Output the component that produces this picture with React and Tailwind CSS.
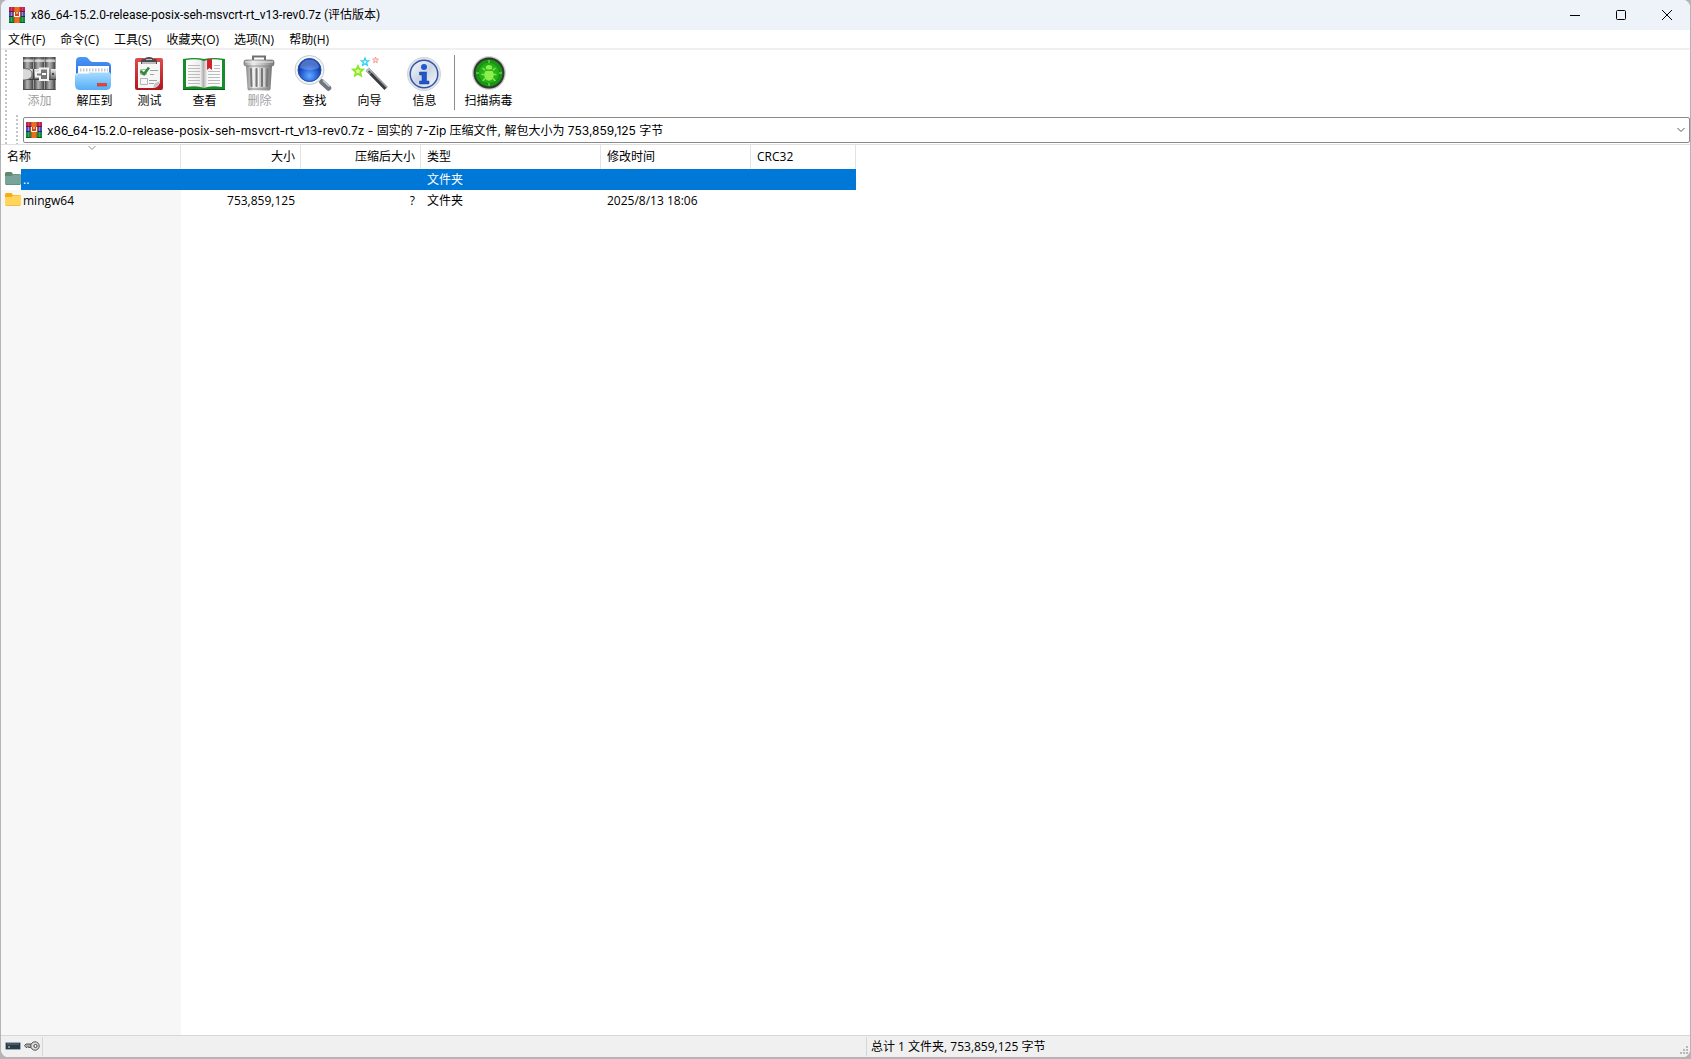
import React from 'react';

const menus = ['文件(F)', '命令(C)', '工具(S)', '收藏夹(O)', '选项(N)', '帮助(H)'];

function RarIcon() {
  return (
    <svg className="w-4 h-4 shrink-0" viewBox="0 0 16 16" aria-hidden="true">
      <rect width="16" height="5" fill="#c02450" />
      <rect y="5" width="16" height="5" fill="#4a4fc0" />
      <rect y="10" width="16" height="6" fill="#128a3c" />
      <path d="M0 4.500h16" stroke="#7a1238" />
      <path d="M0 9.500h16" stroke="#2a2470" />
      <path d="M0 15.500h16" stroke="#0b5a28" />
      <path d="M2.500 5v4M13.500 5v4" stroke="#9a8cd6" />
      <path d="M2.500 10v5M13.500 10v5" stroke="#3fa458" />
      <path d="M2.500 0v4M13.500 0v4" stroke="#d04468" />
      <rect x="5" width="6" height="16" fill="#e8701c" />
      <path d="M5.500 0v16M10.500 0v16" stroke="#c45c1c" />
      <rect x="4" y="5" width="8" height="5" fill="#c44a1c" />
      <path d="M5.500 5v4.500h5V5" stroke="#fff" fill="none" />
      <path d="M8 5v2" stroke="#fff" />
    </svg>
  );
}

function AddIcon() {
  return (
    <svg className="w-[43px] h-9" viewBox="-1 0 43 36" aria-hidden="true">
      <defs>
        <linearGradient id="book">
          <stop offset="0" stopColor="#454545" />
          <stop offset=".4" stopColor="#b4b4b4" />
          <stop offset=".65" stopColor="#8a8a8a" />
          <stop offset="1" stopColor="#3a3a3a" />
        </linearGradient>
        <linearGradient id="belt" x2="0" y2="1">
          <stop offset="0" stopColor="#eee" />
          <stop offset=".5" stopColor="#b5b5b5" />
          <stop offset="1" stopColor="#6c6c6c" />
        </linearGradient>
      </defs>
      <path d="M4 2h10.500v33H4z" fill="url(#book)" />
      <path d="M15 2h10.500v33H15z" fill="url(#book)" />
      <path d="M26 2h10.500v33H26z" fill="url(#book)" />
      <path d="M4.500 4.500h9.500v2.500H4.500zM15.500 4.500h9.500v2.500h-9.500zM26.500 4.500h9.500v2.500h-9.500z" fill="#e6e6e6" opacity=".75" />
      <path d="M4 3h32.500M4 34.500h32.500" stroke="#505050" />
      <path d="M4 14h33v10H4z" fill="url(#belt)" />
      <path d="M4 24.500h33" stroke="#3f3f3f" />
      <path d="M4 13.500c6 0 9 1.500 9 5.500s-3 6-9 6" fill="#d9d9d9" stroke="#6a6a6a" />
      <path d="M14.500 14v10" stroke="#404040" strokeWidth="1.500" />
      <path d="M21 13.500h8v11.500h-8v-3.500h-4v-4h4z" fill="#777" stroke="#f3f3f3" strokeWidth="2" />
      <path d="M23 19h4" stroke="#fff" strokeWidth="2" />
      <path d="M31 14v10" stroke="#4a4a4a" />
      <circle cx="34" cy="19" r="1.200" fill="#444" />
    </svg>
  );
}

function ExtractIcon() {
  return (
    <svg className="w-[43px] h-9" viewBox="0 0 43 36" aria-hidden="true">
      <defs>
        <linearGradient id="folderBack" x2="0" y2="1">
          <stop offset="0" stopColor="#4c98f8" />
          <stop offset="1" stopColor="#2159d9" />
        </linearGradient>
        <linearGradient id="folderFront" x2="0" y2="1">
          <stop offset="0" stopColor="#a9dcff" />
          <stop offset="1" stopColor="#55adf8" />
        </linearGradient>
      </defs>
      <path d="M3 6q0-4 4-4h5c4 0 4 5 8 5h13q5 0 5 4.500v16H3z" fill="url(#folderBack)" />
      <path d="M5 11h31v14H5z" fill="#fff" />
      <path d="M7 15h28" stroke="#c3c7d0" strokeWidth="3" strokeDasharray="1.500 1.500" />
      <path d="M2 21q0-3 3-3h9c3 0 3-1 5-1h16q3 0 3 3v10q0 5-5 5H7q-5 0-5-5z" fill="url(#folderFront)" />
      <path d="M3 21q0-2.500 3-2.500h8c3 0 3-1 5-1h16" fill="none" stroke="#d4efff" />
      <rect x="24.500" y="28.500" width="9" height="2.500" fill="#f0442c" stroke="#c4301f" strokeWidth=".6" />
    </svg>
  );
}

function TestIcon() {
  return (
    <svg className="w-[43px] h-9" viewBox="-1 0 43 36" aria-hidden="true">
      <defs>
        <linearGradient id="board" x2="0" y2="1">
          <stop offset="0" stopColor="#e04b4b" />
          <stop offset="1" stopColor="#b3151b" />
        </linearGradient>
      </defs>
      <rect x="6" y="3" width="28" height="32" rx="2" fill="url(#board)" />
      <path d="M9 7h22v20q-1 5-6 6H9z" fill="#f6f6f6" />
      <path d="M31 26q-1 6-7 7l2-5z" fill="#c3c3c3" />
      <path d="M12 9V6q0-2 2-2h2q0-2 4-2t4 2h2q2 0 2 2v3z" fill="#4c4c50" />
      <path d="M13 8h14" stroke="#e1e1e1" strokeWidth="1.500" />
      <path d="M17 4.500h6" stroke="#c1c1c1" />
      <path d="M11.500 14.500h6v5h-6zM11.500 23.500h7v6h-7z" fill="none" stroke="#b5b5b5" />
      <path d="M11.500 16l3.500 3 5-6.500" fill="none" stroke="#2d8b3c" strokeWidth="2.600" />
      <path d="M21 15.500h8M21 19.500h4M20 25.500h8M20 28.500h5" stroke="#a2a2a2" />
    </svg>
  );
}

function ViewIcon() {
  return (
    <svg className="w-[43px] h-9" viewBox="0 0 43 36" aria-hidden="true">
      <defs>
        <linearGradient id="pageLeft">
          <stop offset="0" stopColor="#fff" />
          <stop offset=".8" stopColor="#ececec" />
          <stop offset="1" stopColor="#a5a5a5" />
        </linearGradient>
        <linearGradient id="pageRight">
          <stop offset="0" stopColor="#bdbdbd" />
          <stop offset=".2" stopColor="#f8f8f8" />
          <stop offset="1" stopColor="#fff" />
        </linearGradient>
      </defs>
      <path d="M0 4q12-2 21 0q9-2 21 0v31H0z" fill="#178c2b" />
      <path d="M0 34.500h42" stroke="#0b5a18" />
      <path d="M3 5q12-2 18 1v27q-7-3-18-1z" fill="url(#pageLeft)" />
      <path d="M39 5q-12-2-18 1v27q7-3 18-1z" fill="url(#pageRight)" />
      <path d="M5 10.500h12M5 13.500h12M5 16.500h12M5 19.500h12M5 22.500h12M5 25.500h12M5 28.500h12M31 10.500h6M31 13.500h6M25 16.500h12M25 19.500h12M25 22.500h12M25 25.500h12M25 28.500h12" stroke="#bcbcbc" />
      <path d="M24 4h5v11l-2.500-2-2.500 2z" fill="#d32229" />
    </svg>
  );
}

function DeleteIcon() {
  return (
    <svg className="w-[43px] h-9" viewBox="-1 0 43 36" aria-hidden="true">
      <defs>
        <linearGradient id="can">
          <stop offset="0" stopColor="#888" />
          <stop offset=".3" stopColor="#eee" />
          <stop offset=".65" stopColor="#bcbcbc" />
          <stop offset="1" stopColor="#747474" />
        </linearGradient>
      </defs>
      <path d="M14 5V1.500h12V5" fill="none" stroke="#707070" strokeWidth="2" />
      <path d="M7 11h26l-1.500 23q0 1.500-2 1.500h-19q-2 0-2-1.500z" fill="url(#can)" />
      <path d="M12 14l.5 17M17.500 14v17M23 14v17M28.500 14l-.5 17" stroke="#777" strokeWidth="2" strokeLinecap="round" />
      <path d="M14 13l.5 19M19.500 13v19M25 13v19" stroke="#f4f4f4" />
      <rect x="5" y="5" width="30" height="6" rx="2" fill="url(#can)" stroke="#777" strokeWidth=".7" />
      <path d="M6 7h28" stroke="#e9e9e9" />
      <path d="M9 34h22" stroke="#888" />
    </svg>
  );
}

function FindIcon() {
  return (
    <svg className="w-[43px] h-9" viewBox="0 0 43 36" aria-hidden="true">
      <defs>
        <radialGradient id="lens" cy=".75">
          <stop offset="0" stopColor="#65a9ff" />
          <stop offset=".55" stopColor="#3270e3" />
          <stop offset="1" stopColor="#183fa8" />
        </radialGradient>
      </defs>
      <path d="M26 24l3.500 3.500" stroke="#bbb" strokeWidth="4" />
      <path d="M29 27l6.500 6" stroke="#70767f" strokeWidth="5.500" strokeLinecap="round" />
      <path d="M30 25.500l6.500 6" stroke="#d0d4d9" strokeWidth="1.500" />
      <circle cx="16.500" cy="15" r="14.500" fill="#f2f6f9" stroke="#c1cad1" />
      <circle cx="16.500" cy="15" r="11.500" fill="url(#lens)" stroke="#264c9e" />
      <path d="M7 13a9.500 8.500 0 0 1 19 0q-9.500 4-19 0z" fill="#9bc3ff" opacity=".4" />
    </svg>
  );
}

function WizardIcon() {
  return (
    <svg className="w-[43px] h-9" viewBox="-1 0 43 36" aria-hidden="true">
      <path d="M18.500 14.500L37 33.500" stroke="#3a3d40" strokeWidth="4.400" />
      <path d="M19.500 13.500L38 32.500" stroke="#a5a9ad" strokeWidth="1.200" />
      <path d="M18 14l4 4" stroke="#b9bdc0" strokeWidth="4.400" />
      <path d="M19.500 16l2 2" stroke="#55585b" strokeWidth="2" />
      <path d="M16 3l1 2.600 2.800.2-2.200 1.800.8 2.800-2.400-1.600-2.400 1.600.8-2.800-2.200-1.800 2.800-.2z" fill="#d8fbff" stroke="#2ccdf0" strokeWidth="1.200" />
      <path d="M26.500 2l.8 2 2.200.2-1.700 1.400.5 2.200-1.800-1.200-1.900 1.200.6-2.200-1.700-1.400 2.200-.2z" fill="#ffdede" stroke="#f08c8c" strokeWidth=".8" />
      <path d="M9 11l1.400 3.200 3.600.3-2.700 2.500.8 3.700L9 18.800l-3.100 1.900.8-3.700L4 14.500l3.600-.3z" fill="#dcff90" stroke="#8be62c" strokeWidth="1.800" />
    </svg>
  );
}

function InfoIcon() {
  return (
    <svg className="w-[43px] h-9" viewBox="-1 0 43 36" aria-hidden="true">
      <defs>
        <linearGradient id="disc" x2="1" y2="1">
          <stop offset="0" stopColor="#f8fbff" />
          <stop offset=".5" stopColor="#cbd5e3" />
          <stop offset="1" stopColor="#fafcff" />
        </linearGradient>
      </defs>
      <circle cx="20" cy="19" r="16.500" fill="#e1e5ea" stroke="#cdd4dc" />
      <circle cx="20" cy="19" r="13.800" fill="url(#disc)" stroke="#3455a5" strokeWidth="1.500" />
      <circle cx="20" cy="12" r="3" fill="#2458ce" />
      <path d="M15.500 17h7v9H25v3h-9.500v-3H18v-6h-2.500z" fill="#2255c9" stroke="#173c9e" strokeWidth=".5" />
    </svg>
  );
}

function VirusIcon() {
  return (
    <svg className="w-[43px] h-9" viewBox="-1 0 43 36" aria-hidden="true">
      <defs>
        <radialGradient id="radar">
          <stop offset="0" stopColor="#2fc61e" />
          <stop offset=".7" stopColor="#22ab18" />
          <stop offset="1" stopColor="#128010" />
        </radialGradient>
      </defs>
      <circle cx="21" cy="18" r="16.500" fill="#b5b5b5" stroke="#d8d8d8" />
      <circle cx="21" cy="18" r="14.500" fill="url(#radar)" stroke="#303a30" strokeWidth="1.800" />
      <circle cx="21" cy="18" r="11" fill="none" stroke="#128a12" />
      <path d="M21 5v3M21 28v3M8 18h3M31 18h3" stroke="#8dee50" />
      <path d="M14.500 13l3 2.500M27.500 13l-3 2.500M13.500 19.500h4M24.500 19.500h4M14.500 26l3-3M27.500 26l-3-3" stroke="#7fe63c" strokeWidth="1.500" />
      <ellipse cx="21" cy="20" rx="4.700" ry="5.800" fill="#8dee50" />
      <ellipse cx="21" cy="12.500" rx="3.200" ry="2.500" fill="#8dee50" />
      <path d="M17.500 15.200h7" stroke="#159b12" />
    </svg>
  );
}

function FolderIcon({ muted }) {
  return (
    <svg className="w-4 h-[13px] mt-[3px] self-start shrink-0" viewBox="0 0 16 13" aria-hidden="true">
      <path d="M0 1.500Q0 0 1.500 0h5L8 2h6.500Q16 2 16 3.500V12H0z" fill={muted ? '#5f8a70' : '#f5ad16'} />
      <path d="M0 5q0-1 1-1h5.500L8 2.500h6.500Q16 2.500 16 4v7.500q0 1.500-1.500 1.500h-13Q0 13 0 11.500z" fill={muted ? '#78a49c' : '#ffd65b'} />
      <path d="M1 12.500h14" stroke={muted ? '#638b7b' : '#edb838'} strokeWidth=".8" />
    </svg>
  );
}

const tools = [
  { label: '添加', Icon: AddIcon, disabled: true },
  { label: '解压到', Icon: ExtractIcon },
  { label: '测试', Icon: TestIcon },
  { label: '查看', Icon: ViewIcon },
  { label: '删除', Icon: DeleteIcon, disabled: true },
  { label: '查找', Icon: FindIcon },
  { label: '向导', Icon: WizardIcon },
  { label: '信息', Icon: InfoIcon },
];

function ToolButton({ label, Icon, disabled, wide }) {
  return (
    <button
      type="button"
      disabled={disabled}
      className={`flex flex-col items-center gap-[2px] ${wide ? 'w-[63px]' : 'w-[55px]'} ${disabled ? 'text-[#a0a0a0]' : 'text-black'}`}
    >
      <Icon />
      <span className="leading-4 whitespace-nowrap">{label}</span>
    </button>
  );
}

function Gripper() {
  return <div className="w-[2px] shrink-0 bg-[repeating-linear-gradient(to_bottom,#c4c4c4_0_2px,transparent_2px_4px)]" />;
}

function TitleBar() {
  return (
    <header className="flex items-center h-[30px] pl-2 bg-[#eef3f9]">
      <RarIcon />
      <h1 className="flex-1 pl-[6px] leading-4 whitespace-nowrap font-['Roboto','Noto_Sans_CJK_SC',sans-serif]">
        x86_64-15.2.0-release-posix-seh-msvcrt-rt_v13-rev0.7z (评估版本)
      </h1>
      <button type="button" aria-label="最小化" className="w-[46px] h-7 flex items-center justify-center">
        <svg className="w-[10px] h-[10px]" viewBox="0 0 10 10"><path d="M0 5.500h10" stroke="#000" /></svg>
      </button>
      <button type="button" aria-label="最大化" className="w-[46px] h-7 flex items-center justify-center">
        <svg className="w-[10px] h-[10px]" viewBox="0 0 10 10"><rect x=".5" y=".5" width="9" height="9" rx="1" fill="none" stroke="#000" /></svg>
      </button>
      <button type="button" aria-label="关闭" className="w-[46px] h-7 flex items-center justify-center">
        <svg className="w-[10px] h-[10px]" viewBox="0 0 10 10"><path d="M0 0l10 10M10 0L0 10" stroke="#000" /></svg>
      </button>
    </header>
  );
}

function FileTable() {
  return (
    <table className="table-fixed w-[855px] border-separate border-spacing-0 text-left">
      <colgroup>
        <col className="w-[180px]" />
        <col className="w-[120px]" />
        <col className="w-[120px]" />
        <col className="w-[180px]" />
        <col className="w-[150px]" />
        <col className="w-[105px]" />
      </colgroup>
      <thead>
        <tr className="h-6 bg-white">
          <th className="relative p-0 pl-[6px] font-normal border-r border-[#e3e3e3]">
            名称
            <svg className="absolute left-[87px] top-px w-2 h-1" viewBox="0 0 8 4"><path d="M.5 0L4 3.500 7.500 0" fill="none" stroke="#8c8c8c" /></svg>
          </th>
          <th className="p-0 pr-[5px] font-normal text-right border-r border-[#e3e3e3]">大小</th>
          <th className="p-0 pr-[5px] font-normal text-right border-r border-[#e3e3e3]">压缩后大小</th>
          <th className="p-0 pl-[6px] font-normal border-r border-[#e3e3e3]">类型</th>
          <th className="p-0 pl-[6px] font-normal border-r border-[#e3e3e3]">修改时间</th>
          <th className="p-0 pl-[6px] font-normal border-r border-[#e3e3e3]">CRC32</th>
        </tr>
      </thead>
      <tbody>
        <tr className="h-[21px] text-white">
          <td className="p-0 bg-white">
            <div className="flex items-center h-[21px] pl-1">
              <FolderIcon muted />
              <span className="flex-1 self-stretch flex items-center pl-[2px] bg-[#0078d7]">..</span>
            </div>
          </td>
          <td className="p-0 bg-[#0078d7]"></td>
          <td className="p-0 bg-[#0078d7]"></td>
          <td className="p-0 pl-[6px] bg-[#0078d7]">文件夹</td>
          <td className="p-0 bg-[#0078d7]"></td>
          <td className="p-0 bg-[#0078d7]"></td>
        </tr>
        <tr className="h-[21px]">
          <td className="p-0">
            <div className="flex items-center h-[21px] pl-1 gap-[2px]">
              <FolderIcon />
              mingw64
            </div>
          </td>
          <td className="p-0 pr-[6px] text-right">753,859,125</td>
          <td className="p-0 pr-[6px] text-right">?</td>
          <td className="p-0 pl-[6px]">文件夹</td>
          <td className="p-0 pl-[6px]">2025/8/13 18:06</td>
          <td className="p-0"></td>
        </tr>
      </tbody>
    </table>
  );
}

function StatusBar() {
  return (
    <footer className="flex items-stretch h-[22px] bg-[#f0f0f0] border-t border-[#d7d7d7]">
      <div className="flex items-center gap-[3px] w-[42px] pl-1 pb-px my-px border-r border-[#d7d7d7]">
        <svg className="w-4 h-2" viewBox="0 0 16 8" aria-hidden="true">
          <rect x=".5" y=".5" width="15" height="7" rx="1" fill="#303940" stroke="#8fb0c4" />
          <path d="M2 2h12" stroke="#65737c" />
          <path d="M3 5h2" stroke="#d4e5e6" />
        </svg>
        <svg className="w-4 h-[10px]" viewBox="0 0 16 10" aria-hidden="true">
          <path d="M7 3H2L.5 4.500 2 6.500h1l1-1 1 1.500 1-1 1 .5" fill="#aaa" stroke="#555" />
          <circle cx="11" cy="5" r="4.200" fill="#dedede" stroke="#505050" />
          <circle cx="11.500" cy="5" r="1.600" fill="#fff" stroke="#444" />
        </svg>
      </div>
      <div className="flex-1"></div>
      <div className="flex justify-between w-[824px] my-px pl-1 border-l border-[#d7d7d7]">
        <p className="self-center leading-4">总计 1 文件夹, 753,859,125 字节</p>
        <svg className="self-end w-[10px] h-[10px]" viewBox="0 0 10 10" fill="#b8b8b8" aria-hidden="true">
          <path d="M6 0h2v2H6zM3 3h2v2H3zM6 3h2v2H6zM0 6h2v2H0zM3 6h2v2H3zM6 6h2v2H6z" />
        </svg>
      </div>
    </footer>
  );
}

export default function App() {
  return (
    <div className="min-h-screen flex flex-col pb-[2px] bg-[#b4b4b4] text-black text-[12px] leading-4 font-['Open_Sans','Noto_Sans_CJK_SC',sans-serif]">
      <div className="flex-1 flex flex-col bg-white border-x border-[#b4b4b4] rounded-lg overflow-hidden">
        <TitleBar />
        <nav className="flex items-center h-5 pt-[2px] pl-[7px] gap-[15px] border-b-2 border-[#f0f0f0]">
          {menus.map((menu) => (
            <button key={menu} type="button" className="whitespace-nowrap">{menu}</button>
          ))}
        </nav>
        <div className="flex pl-1 border-b border-[#e0e0e0]">
          <Gripper />
          <div className="flex-1 flex flex-col pl-[5px]">
            <div className="flex h-[65px] pt-[5px]">
              {tools.map((tool) => (
                <ToolButton key={tool.label} {...tool} />
              ))}
              <div className="w-px h-[55px] mx-[2px] bg-[#8c8c8c]"></div>
              <ToolButton label="扫描病毒" Icon={VirusIcon} wide />
            </div>
            <div className="flex gap-[5px] pl-1">
              <Gripper />
              <div className="flex-1 flex items-center h-[26px] mt-[2px] mb-px pl-[2px] pr-1 border border-[#8a8a8a] rounded-xs">
                <RarIcon />
                <select aria-label="路径" className="flex-1 h-6 pl-[5px] pt-px bg-transparent appearance-none outline-none font-['Inter','Noto_Sans_CJK_SC',sans-serif]">
                  <option>x86_64-15.2.0-release-posix-seh-msvcrt-rt_v13-rev0.7z - 固实的 7-Zip 压缩文件, 解包大小为 753,859,125 字节</option>
                </select>
                <svg className="w-2 h-1" viewBox="0 0 8 4" aria-hidden="true"><path d="M.5 0L4 3.500 7.500 0" fill="none" stroke="#555" /></svg>
              </div>
            </div>
          </div>
        </div>
        <main className="flex-1 bg-[linear-gradient(#f7f7f7,#f7f7f7)] bg-[length:180px_100%] bg-no-repeat">
          <FileTable />
        </main>
        <StatusBar />
      </div>
    </div>
  );
}
